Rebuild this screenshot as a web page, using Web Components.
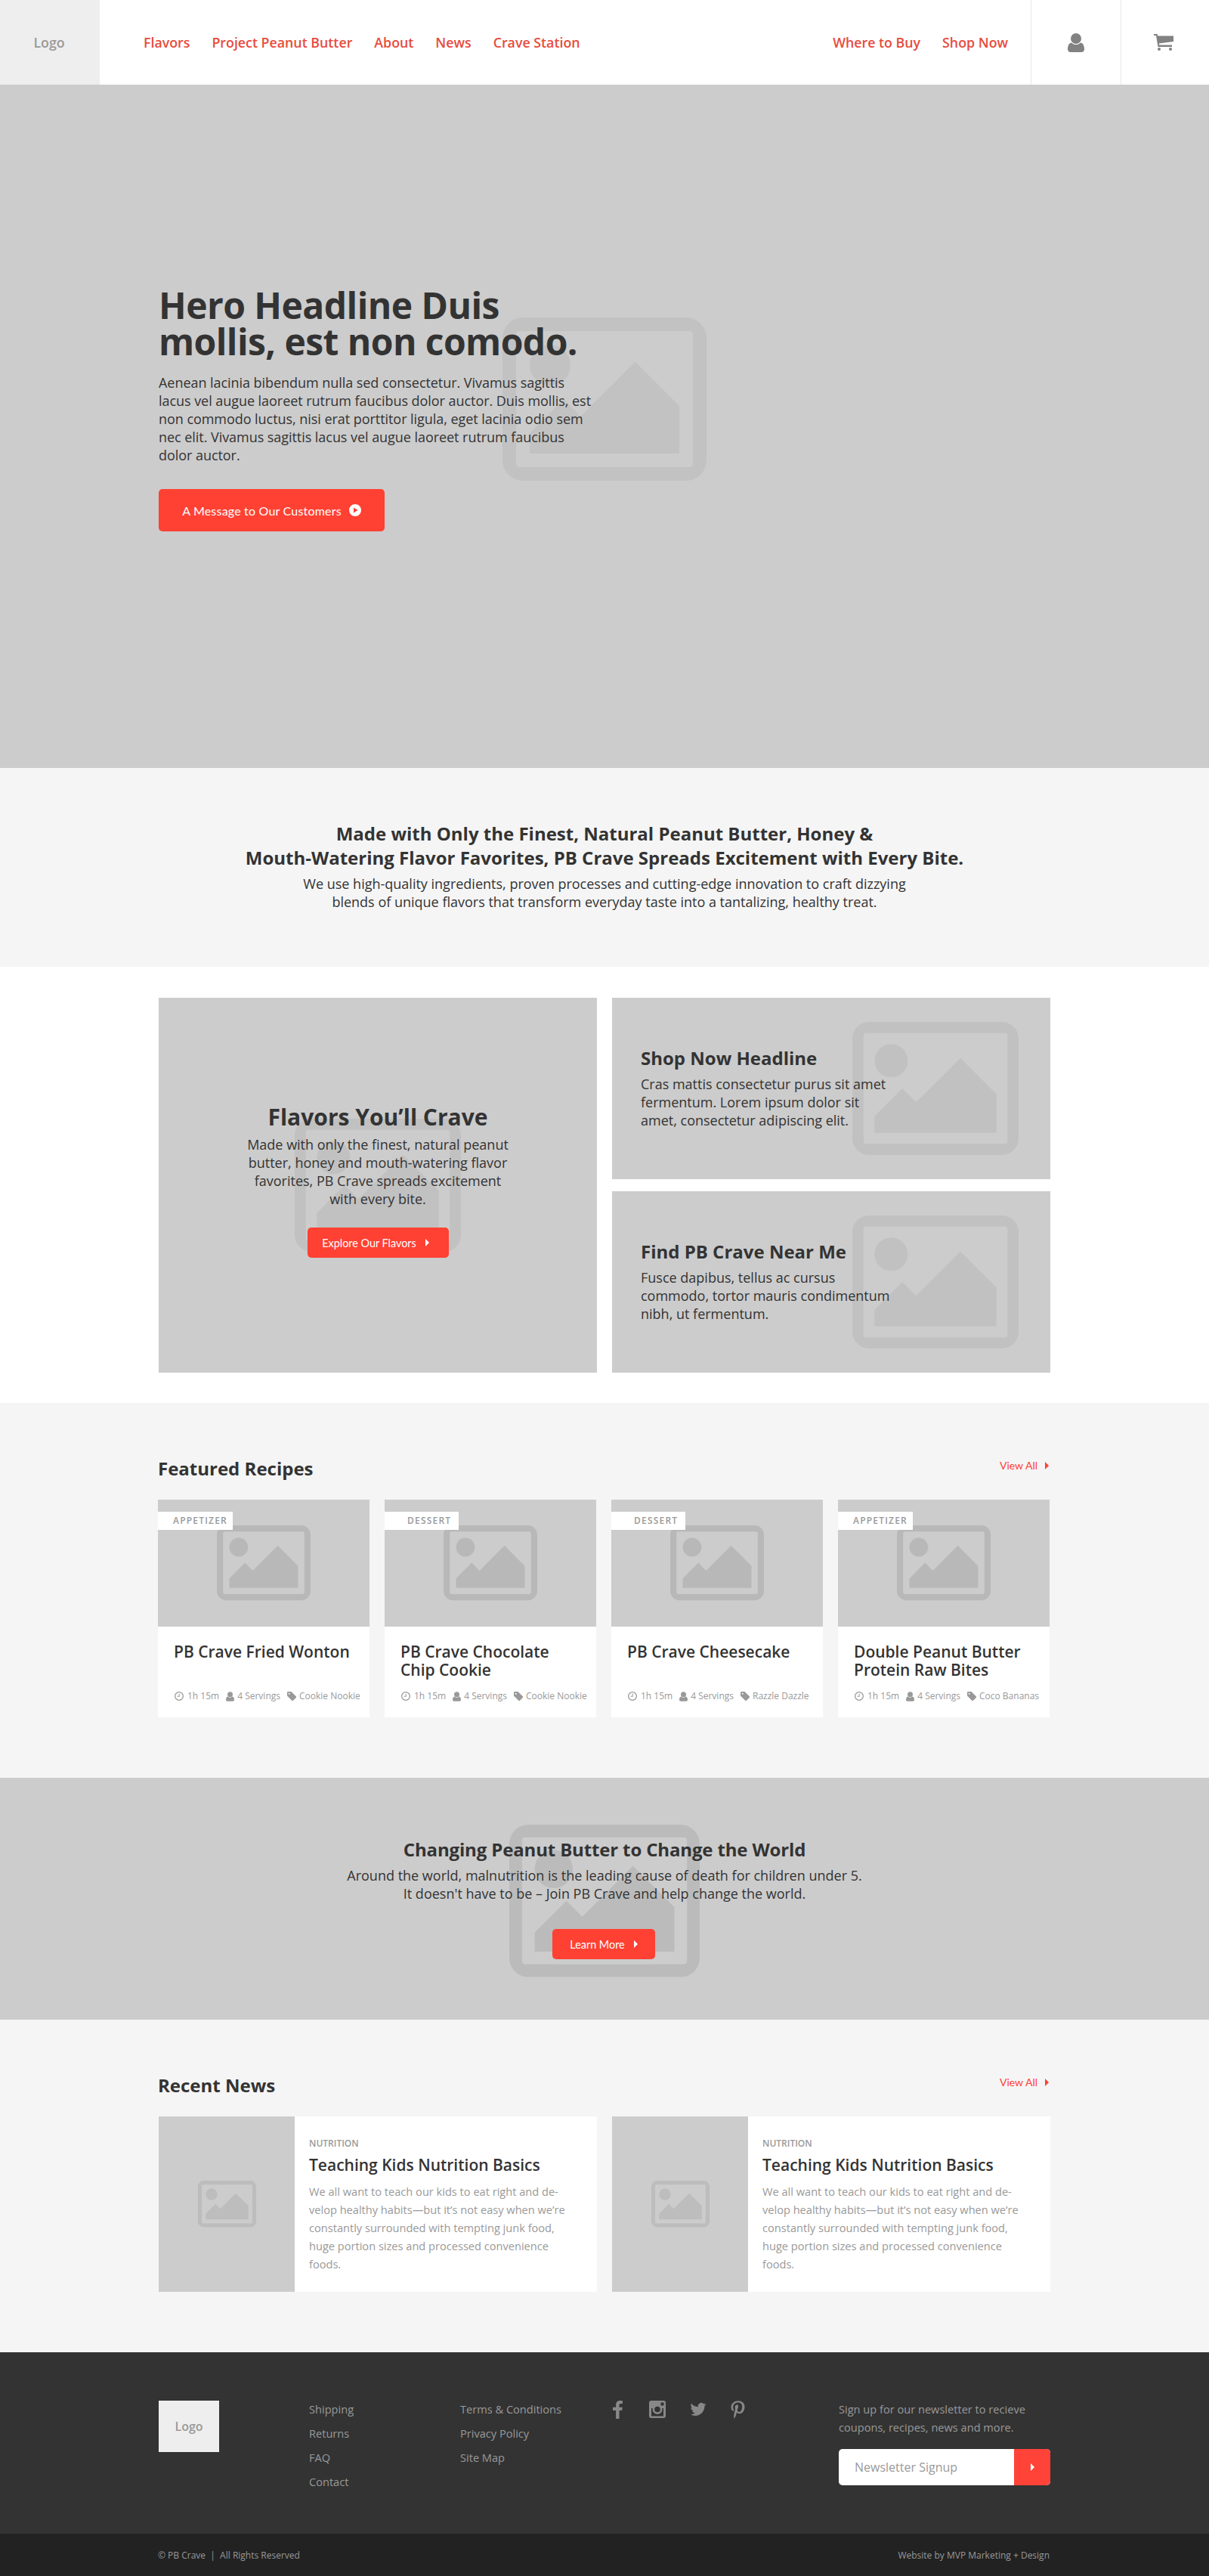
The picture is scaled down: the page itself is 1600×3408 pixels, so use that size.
<!DOCTYPE html>
<html lang="en">
<head>
<meta charset="utf-8">
<title>PB Crave</title>
<style>
  html, body { margin: 0; padding: 0; }
  body { font-family: "Open Sans", "Liberation Sans", sans-serif; color: #333; background: #fff; }
</style>
</head>
<body>
<site-header></site-header>
<hero-banner>
  <span slot="title">Hero Headline Duis mollis, est non comodo.</span>
  Aenean lacinia bibendum nulla sed consectetur. Vivamus sagittis lacus vel augue laoreet rutrum faucibus dolor auctor. Duis mollis, est non commodo luctus, nisi erat porttitor ligula, eget lacinia odio sem nec elit. Vivamus sagittis lacus vel augue laoreet rutrum faucibus dolor auctor.
</hero-banner>
<intro-block></intro-block>
<promo-grid>
  <promo-card big title="Flavors You’ll Crave" cta="Explore Our Flavors">Made with only the finest, natural peanut butter, honey and mouth-watering flavor favorites, PB Crave spreads excitement with every bite.</promo-card>
  <promo-card title="Shop Now Headline">Cras mattis consectetur purus sit amet fermentum. Lorem ipsum dolor sit amet, consectetur adipiscing elit.</promo-card>
  <promo-card title="Find PB Crave Near Me">Fusce dapibus, tellus ac cursus commodo, tortor mauris condimentum nibh, ut fermentum.</promo-card>
</promo-grid>
<content-section title="Featured Recipes" shift>
  <recipe-card tag="Appetizer" title="PB Crave Fried Wonton" maker="Cookie Nookie"></recipe-card>
  <recipe-card tag="Dessert" title="PB Crave Chocolate Chip Cookie" maker="Cookie Nookie"></recipe-card>
  <recipe-card tag="Dessert" title="PB Crave Cheesecake" maker="Razzle Dazzle"></recipe-card>
  <recipe-card tag="Appetizer" title="Double Peanut Butter Protein Raw Bites" maker="Coco Bananas"></recipe-card>
</content-section>
<cause-banner></cause-banner>
<content-section title="Recent News" cols="2">
  <news-card></news-card>
  <news-card></news-card>
</content-section>
<site-footer></site-footer>

<script>
const RED = '#ff4133'

const icons = {
  user: [22, 25, '<circle cx="11" cy="7" r="7"/><path d="M0 21C0 16 2 13 5 12.5 7 14.5 9 15 11 15s4-.5 6-2.5c3 .5 5 3.5 5 8.5 0 2.5-1.5 4-4 4H4c-2.5 0-4-1.500-4-4z"/>'],
  cart: [26, 22, '<path d="M0 0h4.500l.7 2.500H26V10L6.800 12.500l.4 2H24V17H5.500L3 2H0z"/><circle cx="7" cy="20" r="2"/><circle cx="22" cy="20" r="2"/>'],
  clock: [12, 12, '<path fill-rule="evenodd" d="M6 0a6 6 0 1 1 0 12A6 6 0 0 1 6 0zm0 1.300a4.700 4.700 0 1 0 0 9.400 4.700 4.700 0 0 0 0-9.400z"/><path d="M6.700 2.800v3.900H3.600v-1h2.100V2.800z"/>'],
  tag: [12, 12, '<path fill-rule="evenodd" d="M0 1a1 1 0 0 1 1-1h4.500L12 6.500a1 1 0 0 1 0 1.200L7.700 12a1 1 0 0 1-1.200 0L0 5.500zm2.700.8a1 1 0 1 0 0 2 1 1 0 0 0 0-2z"/>'],
  play: [16, 16, '<path fill-rule="evenodd" d="M8 0a8 8 0 1 1 0 16A8 8 0 0 1 8 0zM6 4.500v7L11.500 8z"/>'],
  arrow: [5, 10, '<path d="M0 0l5 5-5 5z"/>'],
  fb: [13, 24, '<path d="M8.500 24V13h3.700l.6-4.300H8.500V6c0-1.200.4-2.100 2.200-2.100H13V.2C12.600.1 11.200 0 9.700 0 6.400 0 4.100 2 4.100 5.600v3.100H0V13h4.100v11z"/>'],
  ig: [22, 23, '<rect width="22" height="23" rx="3"/><rect x="3" y="10" width="16" height="10.500" fill="#333"/><circle cx="11" cy="11.500" r="6.500"/><circle cx="11" cy="11.500" r="3.800" fill="#333"/><rect x="15.500" y="2.500" width="4" height="4" rx=".5" fill="#333"/>'],
  tw: [24, 24, '<path d="M23.950 4.570a10 10 0 0 1-2.820.77 4.960 4.960 0 0 0 2.160-2.720c-.95.55-2 .96-3.120 1.190a4.920 4.920 0 0 0-8.380 4.480C7.690 8.090 4.070 6.130 1.640 3.160a4.820 4.820 0 0 0-.67 2.480c0 1.710.87 3.210 2.190 4.100a4.900 4.900 0 0 1-2.230-.61v.06c0 2.390 1.700 4.380 3.950 4.830a5 5 0 0 1-2.210.08 4.940 4.940 0 0 0 4.600 3.420A9.870 9.870 0 0 1 0 19.540a14 14 0 0 0 7.560 2.210c9.050 0 14-7.500 14-13.980 0-.21 0-.42-.02-.63a9.940 9.940 0 0 0 2.460-2.550z"/>'],
  pin: [384, 512, '<path d="M204 6.500C101.400 6.500 0 74.900 0 185.600 0 256 39.600 296 63.600 296c9.900 0 15.600-27.600 15.600-35.400 0-9.300-23.700-29.100-23.700-67.800 0-80.400 61.200-137.400 140.400-137.400 68.100 0 118.500 38.700 118.500 109.800 0 53.100-21.300 152.700-90.300 152.700-24.900 0-46.200-18-46.200-43.800 0-37.800 26.400-74.400 26.400-113.400 0-66.200-93.900-54.200-93.900 25.800 0 16.800 2.100 35.400 9.600 50.700-13.800 59.400-42 147.900-42 209.100 0 18.900 2.700 37.500 4.500 56.400 3.400 3.800 1.700 3.400 6.900 1.500 50.400-69 48.600-82.500 71.400-172.800 12.300 23.400 44.100 36 69.300 36 106.200 0 153.900-103.500 153.900-196.800C384 71.300 298.200 6.500 204 6.500z"/>']
}

let svgIcon = (name, w, h, color) => {
  let [vw, vh, body] = icons[name]
  return `<svg xmlns="http://www.w3.org/2000/svg" width="${w}" height="${h}" viewBox="0 0 ${vw} ${vh}" fill="${color}" style="display:block;flex:none">${body}</svg>`
}

// Grey picture placeholder, 60x48 units.
let placeholder = (w, color) => `<svg xmlns="http://www.w3.org/2000/svg" width="${w}" height="${w * 0.8}" viewBox="0 0 60 48" fill="${color}" style="display:block">
  <path fill-rule="evenodd" d="M6 0h48a6 6 0 0 1 6 6v36a6 6 0 0 1-6 6H6a6 6 0 0 1-6-6V6a6 6 0 0 1 6-6zM5 4a1 1 0 0 0-1 1v38a1 1 0 0 0 1 1h50a1 1 0 0 0 1-1V5a1 1 0 0 0-1-1z"/>
  <circle cx="14" cy="14" r="6"/>
  <path d="M8 40v-6l10-10 5 5 16-16 13 13v14z"/>
</svg>`

class Base extends HTMLElement {
  constructor () {
    super()
    this.attachShadow({mode: 'open'})
  }
  connectedCallback () { this.shadowRoot.innerHTML = this.render() }
  attr (name) { return this.getAttribute(name) || '' }
}

class CtaButton extends Base {
  render () {
    let big = this.hasAttribute('big')
    return `<style>
      :host { display: inline-flex; align-items: center; justify-content: center; box-sizing: border-box; vertical-align: top;
        background: ${RED}; color: #fff; border-radius: 5px; font-family: Lato, "Liberation Sans", sans-serif;
        height: ${big ? 56 : 40}px; gap: ${big ? 10 : 12}px; font-size: ${big ? 16 : 14.4}px; letter-spacing: ${big ? .2 : 0}px; }
    </style><slot></slot>${big ? svgIcon('play', 16, 16, '#fff') : svgIcon('arrow', 5, 10, '#fff')}`
  }
}

class SiteHeader extends Base {
  render () {
    return `<style>
      :host { display: flex; height: 112px; background: #fff; align-items: stretch; font-size: 17.8px; font-weight: 600; color: #e74c3c; }
      .logo { width: 130px; padding-right: 2px; background: #eee; color: #999; display: flex; align-items: center; justify-content: center; }
      nav { display: flex; align-items: center; gap: 29px; margin-left: 58px; }
      nav.right { margin-left: auto; margin-right: 30px; }
      .ico { width: 118px; border-left: 1px solid #e8e8e8; display: flex; align-items: center; justify-content: center; }
      .ico + .ico { width: 117px; box-sizing: border-box; padding-right: 4px; }
    </style>
    <div class="logo">Logo</div>
    <nav><span>Flavors</span><span>Project Peanut Butter</span><span>About</span><span>News</span><span>Crave Station</span></nav>
    <nav class="right"><span>Where to Buy</span><span>Shop Now</span></nav>
    <div class="ico">${svgIcon('user', 22, 25, '#828282')}</div>
    <div class="ico">${svgIcon('cart', 26, 22, '#828282')}</div>`
  }
}

class HeroBanner extends Base {
  render () {
    return `<style>
      :host { display: block; position: relative; height: 904px; box-sizing: border-box; padding: 268px 0 0 210px; background: #ccc; }
      .pic { position: absolute; left: 665px; top: 308px; }
      .copy { position: relative; width: 580px; }
      h1 { margin: 0 0 18px; font-size: 48px; line-height: 48px; font-weight: 700; letter-spacing: -.55px; color: #333; }
      p { margin: 0 0 33px; font-size: 18px; line-height: 24px; letter-spacing: -.05px; color: #333; }
      cta-button { width: 299px; }
    </style>
    <div class="pic">${placeholder(270, '#c2c2c2')}</div>
    <div class="copy">
      <h1><slot name="title"></slot></h1>
      <p><slot></slot></p>
      <cta-button big>A Message to Our Customers</cta-button>
    </div>`
  }
}

class IntroBlock extends Base {
  render () {
    return `<style>
      :host { display: block; height: 263px; box-sizing: border-box; padding-top: 71px; background: #f5f5f5; text-align: center; color: #333; }
      h2 { margin: 0 0 6px; font-size: 24px; line-height: 32px; font-weight: 700; }
      p { margin: 0; font-size: 18px; line-height: 24px; }
    </style>
    <h2>Made with Only the Finest, Natural Peanut Butter, Honey &amp;<br>Mouth-Watering Flavor Favorites, PB Crave Spreads Excitement with Every Bite.</h2>
    <p>We use high-quality ingredients, proven processes and cutting-edge innovation to craft dizzying<br>blends of unique flavors that transform everyday taste into a tantalizing, healthy treat.</p>`
  }
}

class PromoGrid extends Base {
  render () {
    return `<style>
      :host { display: grid; grid-template-columns: 580px 580px; grid-template-rows: 240px 240px; column-gap: 20px; row-gap: 16px;
        padding: 41px 210px 40px; background: #fff; }
      ::slotted([big]) { grid-row: 1 / span 2; }
    </style><slot></slot>`
  }
}

class PromoCard extends Base {
  render () {
    let big = this.hasAttribute('big')
    let css = big
      ? `:host { padding-top: 140px; text-align: center; }
         .pic { left: 180px; top: 160px; }
         h3 { font-size: 30px; line-height: 36px; }
         p { width: 355px; margin: 0 auto 26px; }
         cta-button { width: 187px; padding-right: 6px; }`
      : `:host { padding: 64px 0 0 38px; }
         .pic { right: 42px; top: 32px; }
         h3 { font-size: 24px; line-height: 32px; }
         p { width: 332px; margin: 0; }`
    return `<style>
      :host { display: block; position: relative; box-sizing: border-box; background: #ccc; color: #333; }
      .pic { position: absolute; }
      .copy { position: relative; }
      h3 { margin: 0 0 6px; font-weight: 700; }
      p { font-size: 18px; line-height: 24px; }
      ${css}
    </style>
    <div class="pic">${placeholder(220, '#c1c1c1')}</div>
    <div class="copy">
      <h3>${this.attr('title')}</h3>
      <p><slot></slot></p>
      ${big ? `<cta-button>${this.attr('cta')}</cta-button>` : ''}
    </div>`
  }
}

class ContentSection extends Base {
  render () {
    let cols = parseInt(this.attr('cols')) || 4
    let track = cols === 2 ? '580px 580px' : 'repeat(4, 280px)'
    return `<style>
      :host { display: block; box-sizing: border-box; padding: 71px 210px 80px; background: #f5f5f5; }
      header { display: flex; justify-content: space-between; align-items: flex-start; margin: 0 0 25px -1px; }
      h2 { margin: 0; font-size: 24px; line-height: 32px; font-weight: 700; color: #333; }
      .all { display: flex; align-items: center; gap: 10px; margin: 2px 2px 0 0; font: 14px/20px Lato, "Liberation Sans", sans-serif; color: ${RED}; }
      .list { display: grid; grid-template-columns: ${track}; gap: 20px; margin-left: ${this.hasAttribute('shift') ? -1 : 0}px; }
    </style>
    <header><h2>${this.attr('title')}</h2><div class="all">View All ${svgIcon('arrow', 5, 10, RED)}</div></header>
    <div class="list"><slot></slot></div>`
  }
}

class RecipeCard extends Base {
  render () {
    // The reference's labels are not evenly padded: the longer one sits closer to the edge.
    let [padL, padR] = this.attr('tag').length > 7 ? [20, 7] : [30, 10]
    return `<style>
      :host { display: block; background: #fff; }
      .img { position: relative; height: 168px; background: #ccc; display: flex; align-items: center; justify-content: center; }
      .tag { position: absolute; left: 0; top: 16px; height: 24px; padding: 0 ${padR}px 0 ${padL}px; background: #fff;
        font-size: 12px; line-height: 24px; font-weight: 600; letter-spacing: 1.2px; text-transform: uppercase; color: #999; }
      h3 { margin: 0; padding: 21px 20px 0 21px; height: 48px; font-size: 21px; line-height: 24px; font-weight: 600; color: #333; }
      .meta { display: flex; align-items: center; padding: 13px 0 18px 22px; font-size: 12px; line-height: 20px; color: #999; white-space: nowrap; }
      .meta span { margin: 0 9px 0 5px; }
      .meta .s { margin-left: 4px; }
    </style>
    <div class="img"><div class="tag">${this.attr('tag')}</div>${placeholder(124, '#b8b8b8')}</div>
    <h3>${this.attr('title')}</h3>
    <div class="meta">${svgIcon('clock', 12, 12, '#999')}<span>1h 15m</span>${svgIcon('user', 11, 13, '#999')}<span class="s">4 Servings</span>${svgIcon('tag', 12, 12, '#999')}<span class="s">${this.attr('maker')}</span></div>`
  }
}

class CauseBanner extends Base {
  render () {
    return `<style>
      :host { display: block; position: relative; height: 320px; box-sizing: border-box; padding-top: 79px; background: #ccc; text-align: center; color: #333; }
      .pic { position: absolute; left: 674px; top: 62px; }
      .copy { position: relative; }
      h2 { margin: 0 0 6px; font-size: 24px; line-height: 32px; font-weight: 700; letter-spacing: -.15px; }
      p { margin: 0 0 35px; font-size: 18px; line-height: 24px; }
      cta-button { width: 136px; margin-left: -2px; }
    </style>
    <div class="pic">${placeholder(252, '#bbb')}</div>
    <div class="copy">
      <h2>Changing Peanut Butter to Change the World</h2>
      <p>Around the world, malnutrition is the leading cause of death for children under 5.<br>It doesn't have to be – Join PB Crave and help change the world.</p>
      <cta-button>Learn More</cta-button>
    </div>`
  }
}

class NewsCard extends Base {
  render () {
    return `<style>
      :host { display: flex; height: 232px; background: #fff; }
      .img { width: 180px; flex: none; background: #ccc; display: flex; align-items: center; justify-content: center; }
      .body { padding: 28px 12px 0 19px; }
      .cat { font-size: 12px; line-height: 16px; font-weight: 600; color: #999; }
      h3 { margin: 6px 0 9px; font-size: 21px; line-height: 28px; font-weight: 600; color: #333; white-space: nowrap; }
      p { margin: 0; font-size: 14.6px; line-height: 24px; color: #999; }
    </style>
    <div class="img">${placeholder(77, '#bdbdbd')}</div>
    <div class="body">
      <div class="cat">NUTRITION</div>
      <h3>Teaching Kids Nutrition Basics</h3>
      <p>We all want to teach our kids to eat right and de-<br>velop healthy habits—but it’s not easy when we’re<br>constantly surrounded with tempting junk food,<br>huge portion sizes and processed convenience<br>foods.</p>
    </div>`
  }
}

class SiteFooter extends Base {
  render () {
    return `<style>
      :host { display: block; font-size: 14.6px; color: #999; }
      .top { height: 240px; box-sizing: border-box; padding: 64px 210px 0; background: #333; display: grid;
        grid-template-columns: 199px 200px 202px 299px 280px; align-items: start; }
      .logo { width: 80px; height: 68px; background: #eee; display: flex; align-items: center; justify-content: center; font-size: 16px; font-weight: 600; color: #999; }
      .links { margin-top: -5px; line-height: 32px; }
      .social { display: flex; align-items: flex-start; }
      .social svg:nth-child(2) { margin-left: 35px; }
      .social svg:nth-child(3) { margin: 1px 0 0 32px; }
      .social svg:nth-child(4) { margin-left: 32px; }
      .news p { margin: -1px 0 17px; line-height: 24px; }
      .field { display: flex; height: 48px; border-radius: 5px; overflow: hidden; background: #fff; }
      .field span { flex: 1; padding-left: 21px; font-size: 16px; line-height: 48px; color: #999; }
      .field b { width: 48px; background: #ff4338; display: flex; align-items: center; justify-content: center; }
      .bottom { height: 56px; box-sizing: border-box; padding: 0 211px 0 209px; background: #222; display: flex; align-items: center; justify-content: space-between; font-size: 12px; }
    </style>
    <div class="top">
      <div class="logo">Logo</div>
      <div class="links"><div>Shipping</div><div>Returns</div><div>FAQ</div><div>Contact</div></div>
      <div class="links"><div>Terms &amp; Conditions</div><div>Privacy Policy</div><div>Site Map</div></div>
      <div class="social">${svgIcon('fb', 13, 24, '#888')}${svgIcon('ig', 22, 23, '#888')}${svgIcon('tw', 22, 21, '#888')}${svgIcon('pin', 19, 24, '#888')}</div>
      <div class="news">
        <p>Sign up for our newsletter to recieve<br>coupons, recipes, news and more.</p>
        <div class="field"><span>Newsletter Signup</span><b>${svgIcon('arrow', 5, 10, '#fff')}</b></div>
      </div>
    </div>
    <div class="bottom"><span>© PB Crave &nbsp;|&nbsp; All Rights Reserved</span><span>Website by MVP Marketing + Design</span></div>`
  }
}

customElements.define('cta-button', CtaButton)
customElements.define('site-header', SiteHeader)
customElements.define('hero-banner', HeroBanner)
customElements.define('intro-block', IntroBlock)
customElements.define('promo-grid', PromoGrid)
customElements.define('promo-card', PromoCard)
customElements.define('content-section', ContentSection)
customElements.define('recipe-card', RecipeCard)
customElements.define('cause-banner', CauseBanner)
customElements.define('news-card', NewsCard)
customElements.define('site-footer', SiteFooter)
</script>
</body>
</html>
